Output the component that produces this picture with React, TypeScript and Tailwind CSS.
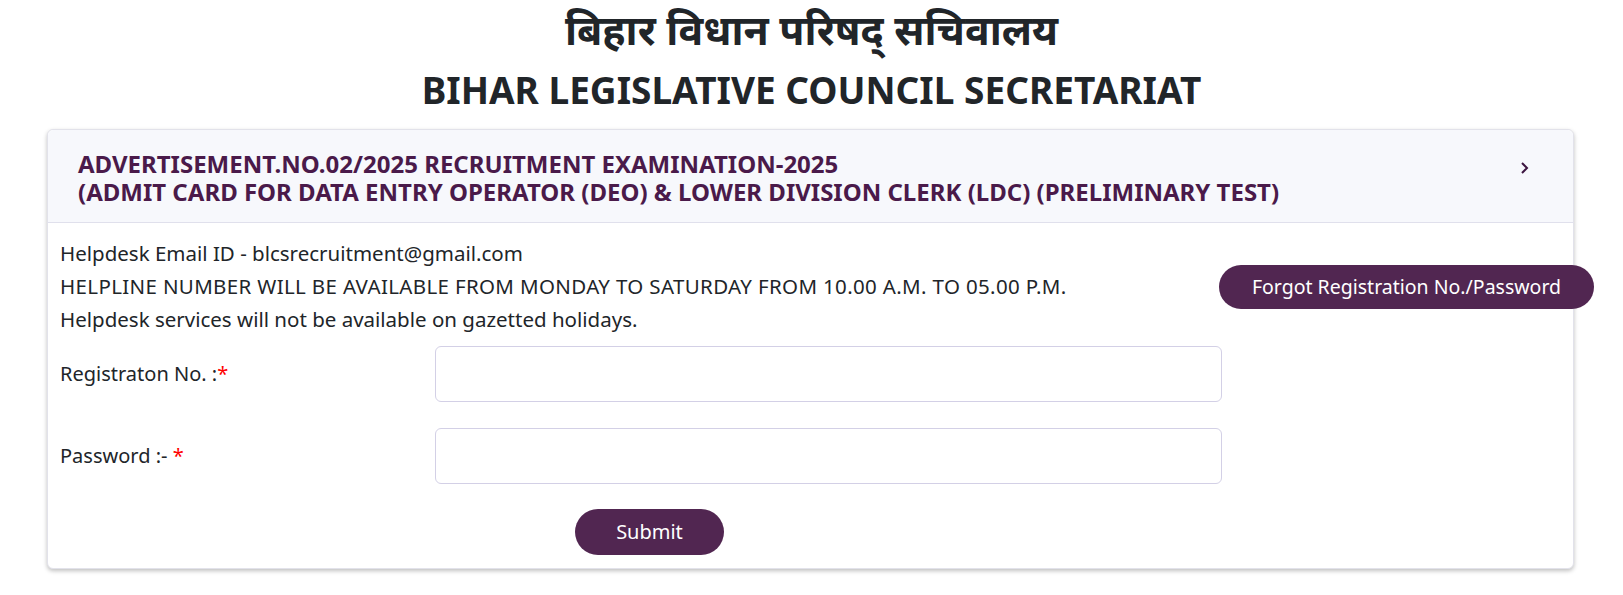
import React from "react";

export default function App() {
  const body = { fontFamily: '"Segoe UI", "Noto Sans", "Open Sans", sans-serif' };
  return (
    <div className="min-h-[595px] bg-white text-[#212529]" style={body}>
      <div className="pt-[7px] text-center">
        <h1
          className="text-[41px] font-bold leading-[56px] text-[#212529]"
          style={{ fontFamily: '"Noto Sans Devanagari", "Noto Sans", "Lohit Devanagari", sans-serif' }}
        >
          बिहार विधान परिषद् सचिवालय
        </h1>
        <h2 className="mt-[2px] text-[37px] font-bold leading-[50px] text-[#212529]">
          BIHAR LEGISLATIVE COUNCIL SECRETARIAT
        </h2>
      </div>
      <div className="ml-[47px] mt-[14px] w-[1527px] rounded-[6px] border border-[#e2e2ea] bg-white shadow-[0_2px_4px_rgba(0,0,0,0.25)]">
        <div className="flex h-[93px] items-center justify-between rounded-t-[6px] border-b border-[#e0e0ec] bg-[#f7f8fc] pl-[30px] pr-[42px]">
          <div className="pt-[4px] text-[24px] font-bold leading-[28px] text-[#4a1a4a]">
            <div>ADVERTISEMENT.NO.02/2025 RECRUITMENT EXAMINATION-2025</div>
            <div>(ADMIT CARD FOR DATA ENTRY OPERATOR (DEO) &amp; LOWER DIVISION CLERK (LDC) (PRELIMINARY TEST)</div>
          </div>
          <svg width="12" height="14" viewBox="0 0 12 14" className="mb-[16px]">
            <path d="M3 2 L8 7 L3 12" fill="none" stroke="#3d1540" strokeWidth="2" />
          </svg>
        </div>
        <div className="pl-[12px] pb-[13px]">
          <div className="flex items-center justify-between pt-[14px]">
            <div className="text-[20.5px] leading-[33px] text-[#212529]">
              <div>Helpdesk Email ID - blcsrecruitment@gmail.com</div>
              <div className="tracking-[0.35px]">HELPLINE NUMBER WILL BE AVAILABLE FROM MONDAY TO SATURDAY FROM 10.00 A.M. TO 05.00 P.M.</div>
              <div>Helpdesk services will not be available on gazetted holidays.</div>
            </div>
            <button className="mr-[-21px] h-[44px] w-[375px] rounded-full bg-[#512651] text-[19.5px] text-white">
              Forgot Registration No./Password
            </button>
          </div>
          <div className="mt-[10px] flex items-center">
            <div className="w-[375px] text-[20px]">
              Registraton No. :<span className="text-[#ff0000]">*</span>
            </div>
            <input className="h-[56px] w-[787px] rounded-[6px] border border-[#d3d0e6] bg-white outline-none" />
          </div>
          <div className="mt-[26px] flex items-center">
            <div className="w-[375px] text-[20px]">
              Password :- <span className="text-[#ff0000]">*</span>
            </div>
            <input type="password" className="h-[56px] w-[787px] rounded-[6px] border border-[#d3d0e6] bg-white outline-none" />
          </div>
          <div className="mt-[25px] flex">
            <button className="ml-[515px] h-[46px] w-[149px] rounded-full bg-[#512651] text-[20px] text-white">
              Submit
            </button>
          </div>
        </div>
      </div>
    </div>
  );
}
